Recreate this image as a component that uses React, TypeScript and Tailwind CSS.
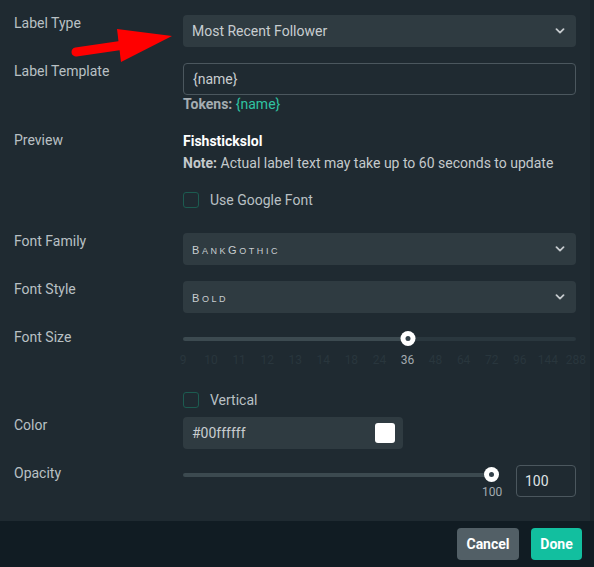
import React from "react";

const ticks = ["9", "10", "11", "12", "13", "14", "18", "24", "36", "48", "64", "72", "96", "144", "288"];

function Chevron() {
  return (
    <svg width="10" height="6" viewBox="0 0 10 6" className="shrink-0">
      <path d="M1.5 1.2 L5 4.6 L8.5 1.2" fill="none" stroke="#c5cacd" strokeWidth="1.8" strokeLinecap="round" strokeLinejoin="round" />
    </svg>
  );
}

function Label({ children }: { children: React.ReactNode }) {
  return <div className="w-[169px] shrink-0 text-[14px] leading-[16px] text-[#b9c0c4]">{children}</div>;
}

// BankGothic style: caps with smaller caps for lowercase letters
function SmallCaps({ parts }: { parts: [string, string][] }) {
  return (
    <span className="font-['Liberation_Sans',sans-serif] font-normal tracking-[0.16em] text-[#c8cdd0]">
      {parts.map(([big, small], i) => (
        <React.Fragment key={i}>
          <span className="text-[11px]">{big}</span>
          <span className="text-[9px]">{small}</span>
        </React.Fragment>
      ))}
    </span>
  );
}

function Select({ children }: { children: React.ReactNode }) {
  return (
    <div className="flex h-8 flex-1 items-center justify-between rounded-[4px] bg-[#2f3b41] pl-[9px] pr-[11px]">
      {children}
      <Chevron />
    </div>
  );
}

function Checkbox({ label }: { label: string }) {
  return (
    <div className="flex items-center pl-[169px]">
      <div className="h-4 w-4 rounded-[3px] border border-[#1c5b50]" />
      <span className="ml-[11px] text-[14px] leading-[16px] text-[#b9c0c4]">{label}</span>
    </div>
  );
}

function Thumb() {
  return (
    <div className="flex h-[15px] w-[15px] items-center justify-center rounded-full bg-white">
      <div className="h-[5px] w-[5px] rounded-full bg-[#33414a]" />
    </div>
  );
}

export default function App() {
  return (
    <div className="relative h-[567px] w-[594px] overflow-hidden bg-[#111c23] font-['Roboto',sans-serif]">
      <div className="flex h-[521px]">
        <div className="flex-1 bg-[#1f2a31] pl-[14px] pr-[14px] pt-[15px]">
          {/* Label Type */}
          <div className="flex">
            <Label>Label Type</Label>
            <Select>
              <span className="text-[14px] text-[#c8cdd0]">Most Recent Follower</span>
            </Select>
          </div>

          {/* Label Template */}
          <div className="mt-4 flex">
            <Label>Label Template</Label>
            <div className="flex-1">
              <div className="flex h-8 items-center rounded-[4px] border border-[#4b575e] px-[9px] text-[14px] text-[#c8cdd0]">
                {"{name}"}
              </div>
              <div className="text-[14px] leading-[18px]">
                <span className="font-bold text-[#a5adb2]">Tokens:</span>{" "}
                <span className="text-[#2fc3a2]">{"{name}"}</span>
              </div>
            </div>
          </div>

          {/* Preview */}
          <div className="mt-[19px] flex">
            <Label>Preview</Label>
            <div className="flex-1">
              <div className="text-[14px] font-bold leading-[18px] text-white">Fishstickslol</div>
              <div className="mt-[3px] text-[14px] leading-[20px] text-[#c4c9cc]">
                <span className="font-bold">Note:</span> Actual label text may take up to 60 seconds to update
              </div>
            </div>
          </div>

          <div className="mt-[19px]">
            <Checkbox label="Use Google Font" />
          </div>

          {/* Font Family */}
          <div className="mt-[25px] flex">
            <Label>Font Family</Label>
            <Select>
              <SmallCaps parts={[["B", "ANK"], ["G", "OTHIC"]]} />
            </Select>
          </div>

          {/* Font Style */}
          <div className="mt-4 flex">
            <Label>Font Style</Label>
            <Select>
              <SmallCaps parts={[["B", "OLD"]]} />
            </Select>
          </div>

          {/* Font Size */}
          <div className="mt-4 flex">
            <Label>Font Size</Label>
            <div className="flex-1">
              <div className="relative flex h-5 items-center">
                <div className="flex h-1 w-full overflow-hidden rounded-full">
                  <div className="h-full w-[57.3%] bg-[#3c4a50]" />
                  <div className="h-full flex-1 bg-[#2a373e]" />
                </div>
                <div className="absolute left-[57.3%] top-[2px] -translate-x-1/2">
                  <Thumb />
                </div>
              </div>
              <div className="mt-1 flex justify-between text-[12px] leading-[14px]">
                {ticks.map((t) => (
                  <div key={t} className="flex w-0 justify-center">
                    <span className={t === "36" ? "text-[#a3abb0]" : "text-[#29363d]"}>{t}</span>
                  </div>
                ))}
              </div>
            </div>
          </div>

          <div className="mt-[25px]">
            <Checkbox label="Vertical" />
          </div>

          {/* Color */}
          <div className="mt-[9px] flex">
            <Label>Color</Label>
            <div className="flex h-8 w-[220px] items-center justify-between rounded-[4px] bg-[#2f3b41] pl-[9px] pr-2">
              <span className="text-[14px] text-[#c8cdd0]">#00ffffff</span>
              <div className="h-5 w-5 rounded-[3px] bg-white" />
            </div>
          </div>

          {/* Opacity */}
          <div className="mt-4 flex">
            <Label>Opacity</Label>
            <div className="flex flex-1 gap-6">
              <div className="w-[309px]">
                <div className="relative flex h-5 items-center">
                  <div className="h-1 w-full rounded-full bg-[#3c4a50]" />
                  <div className="absolute right-[-7px] top-[2px]">
                    <Thumb />
                  </div>
                </div>
                <div className="flex justify-end text-[12px] leading-[14px]">
                  <div className="flex w-0 justify-center">
                    <span className="text-[#a3abb0]">100</span>
                  </div>
                </div>
              </div>
              <div className="flex h-8 flex-1 items-center rounded-[4px] border border-[#4b575e] px-[8px] text-[14px] text-[#dfe3e5]">
                100
              </div>
            </div>
          </div>
        </div>
        <div className="w-1 bg-[#19242a]" />
      </div>

      {/* Footer */}
      <div className="flex h-[46px] items-center justify-end gap-3 pr-3">
        <button className="h-8 w-[62px] rounded-[4px] bg-[#525f66] text-[14px] font-bold text-white">Cancel</button>
        <button className="h-8 w-[51px] rounded-[4px] bg-[#12bf9f] text-[14px] font-bold text-white">Done</button>
      </div>

      {/* Red arrow annotation */}
      <svg className="pointer-events-none absolute left-0 top-0" width="200" height="80" viewBox="0 0 200 80">
        <line x1="76" y1="52" x2="124" y2="45" stroke="#ff0000" strokeWidth="9" strokeLinecap="round" />
        <polygon points="117,29 172,36 121,62" fill="#ff0000" />
      </svg>
    </div>
  );
}
